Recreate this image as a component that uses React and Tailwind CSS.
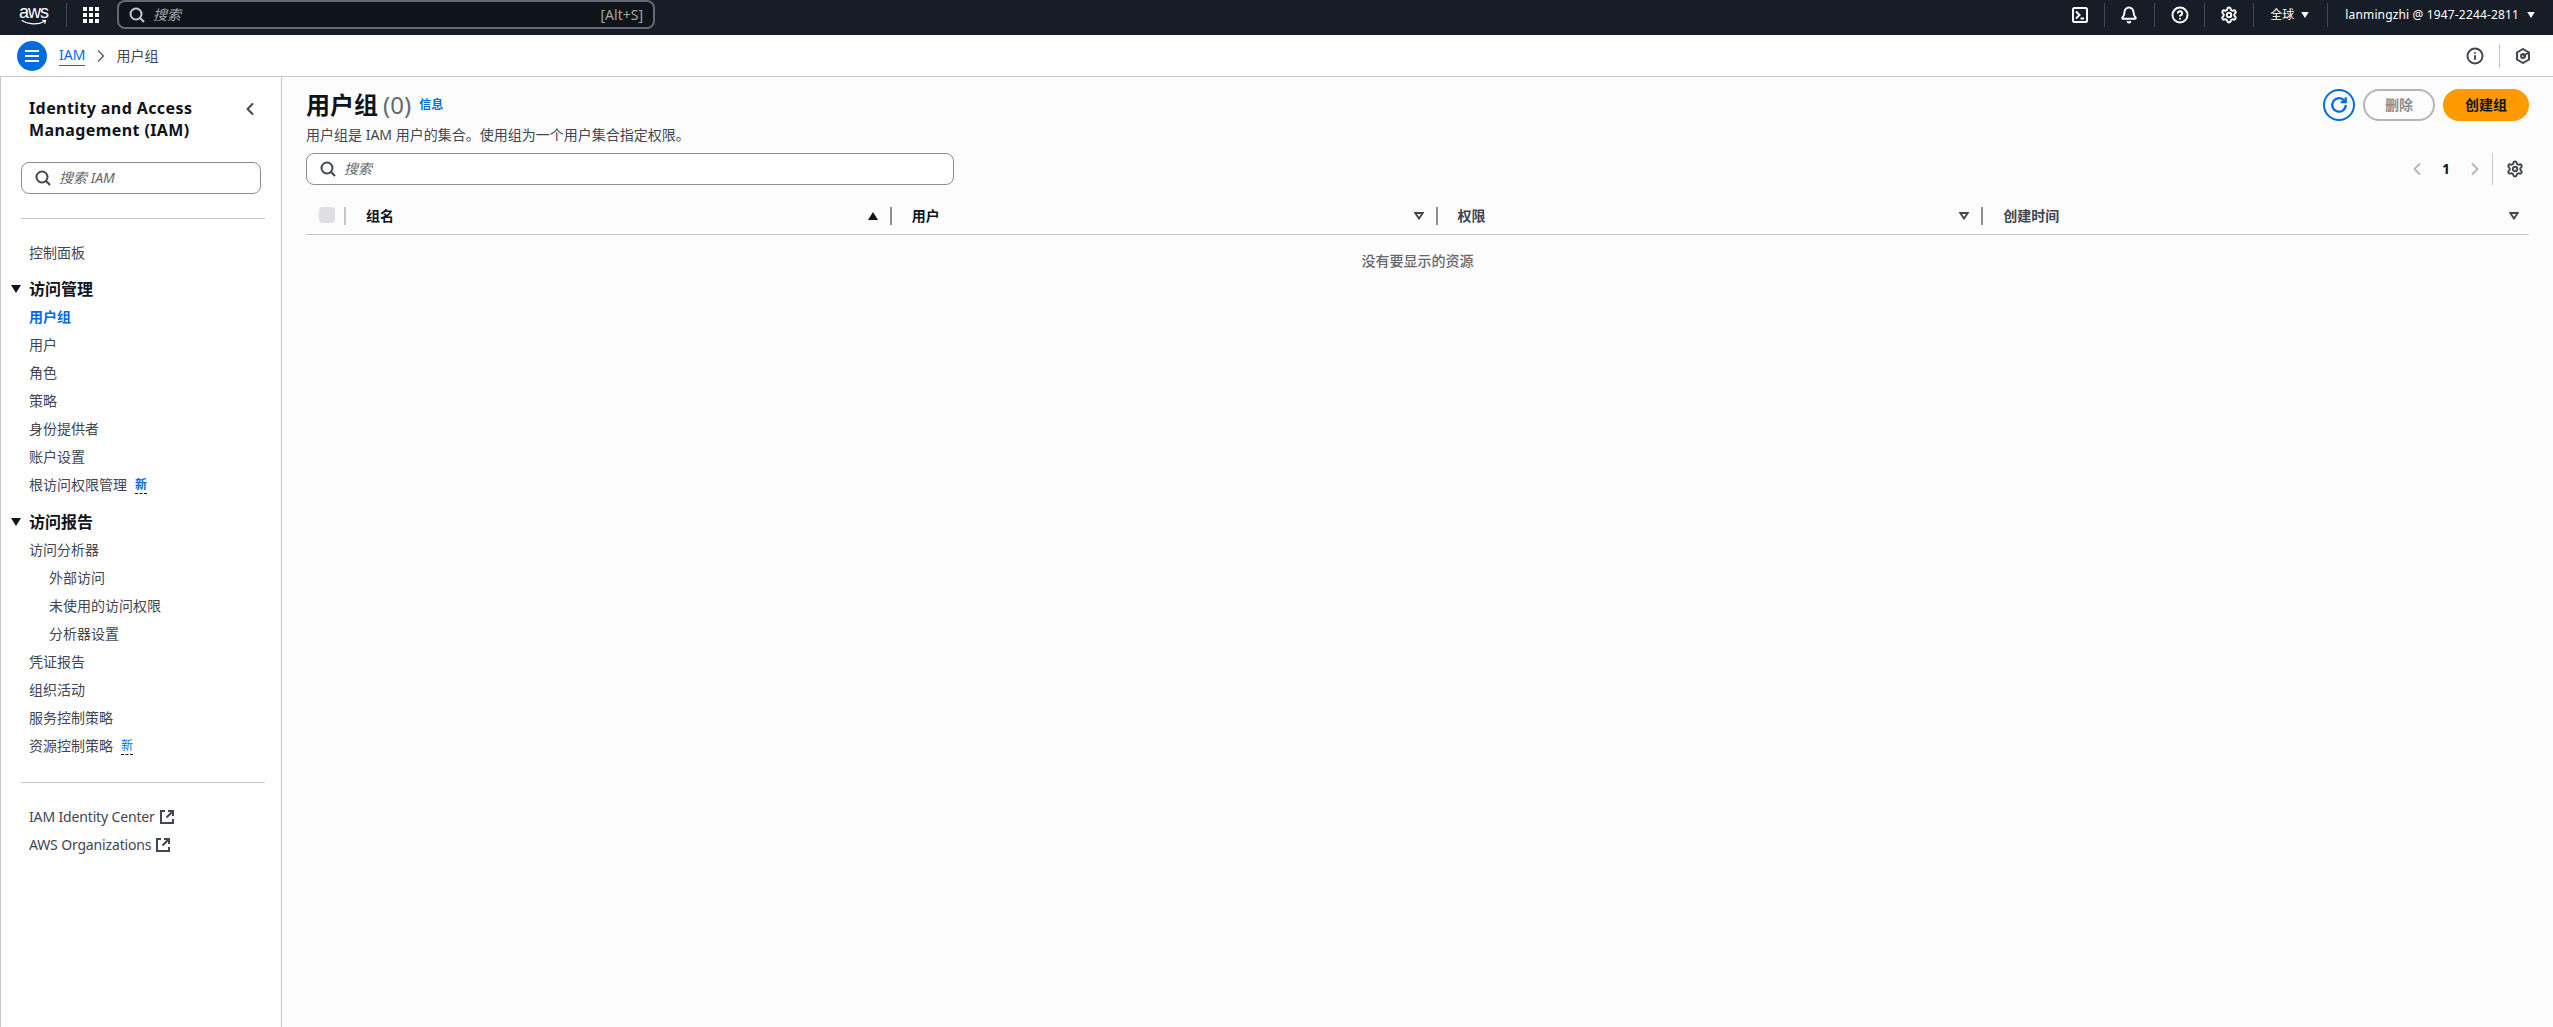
import { Settings, Bell, CircleHelp, Info, ChevronLeft, ChevronRight } from "lucide-react";

const FONT = "font-['Noto_Sans','Noto_Sans_CJK_SC',sans-serif]";

function SearchIcon({ className }) {
  return (
    <svg viewBox="0 0 16 16" className={`w-4 h-4 shrink-0 ${className}`} fill="none" stroke="currentColor" strokeWidth="2">
      <circle cx="7" cy="7" r="5.500" />
      <path d="M15 15l-4.200-4.200" />
    </svg>
  );
}

function Caret({ className }) {
  return (
    <svg viewBox="0 0 10 8" className={`shrink-0 ${className}`} fill="currentColor">
      <path d="M0 0h10L5 8z" />
    </svg>
  );
}

function SortDown() {
  return (
    <svg viewBox="0 0 10 8" className="w-[10px] h-2 shrink-0 text-[#424650]" fill="none" stroke="currentColor" strokeWidth="1.8">
      <path d="M1.200 1h7.600L5 6.600z" />
    </svg>
  );
}

function ExternalIcon() {
  return (
    <svg viewBox="0 0 16 16" className="w-4 h-4 shrink-0 text-[#424650] ml-[4px]" fill="none" stroke="currentColor" strokeWidth="2">
      <path d="M6 2H2v12h12v-4" />
      <path d="M9 2h5v5M14 2L7.500 8.500" />
    </svg>
  );
}

function NavDivider() {
  return <div className="w-px h-6 bg-[#424650]" />;
}

function NavItem({ children, indent, active, latin }) {
  return (
    <div
      className={`h-7 flex items-center text-sm ${indent ? "pl-[49px]" : "pl-[29px]"} ${
        active ? "font-bold text-[#006ce0]" : "text-[#424650]"
      } ${latin ? "tracking-[-0.15px]" : ""}`}
    >
      {children}
    </div>
  );
}

function NewBadge({ bold }) {
  return (
    <span className={`ml-2 text-[12px] leading-4 text-[#006ce0] border-b border-dashed border-[#0f141a] ${bold ? "font-bold" : ""}`}>
      新
    </span>
  );
}

function SectionHead({ children, second }) {
  return (
    <div className={`h-7 flex items-center pl-[11px] ${second ? "mt-[9px]" : "mt-2"}`}>
      <Caret className="w-[10px] h-2 text-[#0f141a]" />
      <span className="ml-2 text-base font-bold text-[#0f141a]">{children}</span>
    </div>
  );
}

function Column({ label, strong, sorted, last }) {
  return (
    <div className="relative flex items-center justify-between pl-5 pr-[10px] pb-[2px]">
      <span className={`text-sm font-bold ${strong ? "text-[#0f141a]" : "text-[#424650]"}`}>{label}</span>
      <div className={last ? "" : "mr-[4px]"}>
        {sorted ? <Caret className="w-[10px] h-2 text-[#0f141a] rotate-180" /> : <SortDown />}
      </div>
      {!last && <div className="absolute right-0 top-[7px] w-[2px] h-[18px] bg-[#8c8c94]" />}
    </div>
  );
}

export default function App() {
  return (
    <div className={`h-screen flex flex-col overflow-hidden bg-[#fcfcfc] ${FONT}`}>
      {/* Top nav */}
      <header className="h-[35px] shrink-0 bg-[#161d26] flex items-center pb-[6px] text-white">
        <div className="w-[66px] flex justify-end pr-[17px]">
          <div className="relative w-[30px] h-[20px]">
            <span className="absolute -top-[3px] left-0 text-[18px] leading-5 tracking-[-1px] font-['Liberation_Sans',sans-serif]">aws</span>
            <svg viewBox="0 0 30 8" className="absolute left-0 -bottom-[1px] w-[30px] h-[7px]" fill="none" stroke="currentColor" strokeWidth="1.500">
              <path d="M1 1.500C8 6.500 20 7 27 2.500M24.500 1.500L28 1.800l-.8 3.400" />
            </svg>
          </div>
        </div>
        <NavDivider />
        <div className="ml-4 grid grid-cols-3 gap-[2px] w-4 h-4">
          {[...Array(9)].map((_, i) => (
            <div key={i} className="bg-white" />
          ))}
        </div>
        <div className="ml-[18px] w-[538px] h-[29px] self-start bg-[#0f141a] border-2 border-[#656871] rounded-lg flex items-center px-[10px]">
          <SearchIcon className="text-[#c6c6cd]" />
          <span className="ml-2 text-sm italic text-[#a4a4ad]">搜索</span>
          <span className="ml-auto text-sm text-[#a4a4ad]">[Alt+S]</span>
        </div>
        <div className="ml-auto flex items-center">
          <svg viewBox="0 0 16 16" className="w-4 h-4" fill="none" stroke="currentColor" strokeWidth="2">
            <rect x="1" y="1" width="14" height="14" rx="1.500" />
            <path d="M4 4.500L7.500 8 4 11.500M8.500 11.500h3.500" />
          </svg>
          <div className="ml-4 mr-[15px]"><NavDivider /></div>
          <Bell className="w-[18px] h-[18px]" strokeWidth={2.6} />
          <div className="mx-4"><NavDivider /></div>
          <CircleHelp className="w-[18px] h-[18px]" strokeWidth={2.6} />
          <div className="mx-[15px]"><NavDivider /></div>
          <Settings className="w-[18px] h-[18px]" strokeWidth={2.6} />
          <div className="ml-[15px] mr-4"><NavDivider /></div>
          <span className="text-xs">全球</span>
          <Caret className="w-2 h-[6px] ml-[7px] text-white" />
          <div className="ml-[18px] mr-[17px]"><NavDivider /></div>
          <span className="text-xs tracking-[0.15px]">lanmingzhi @ 1947-2244-2811</span>
          <Caret className="w-2 h-[6px] ml-2 mr-[18px] text-white" />
        </div>
      </header>

      {/* Breadcrumb bar */}
      <div className="h-[42px] shrink-0 bg-white border-b border-[#c6c6cd] flex items-center pl-[17px] pr-[22px]">
        <div className="w-[30px] h-[30px] rounded-full bg-[#006ce0] flex flex-col items-center justify-center gap-[3px]">
          <div className="w-[14px] h-[2px] bg-white" />
          <div className="w-[14px] h-[2px] bg-white" />
          <div className="w-[14px] h-[2px] bg-white" />
        </div>
        <span className="ml-3 text-sm leading-[20px] text-[#006ce0] border-b border-[#006ce0]">IAM</span>
        <ChevronRight className="w-5 h-5 ml-[6px] mr-[5px] text-[#656871]" strokeWidth={2} />
        <span className="text-sm text-[#424650]">用户组</span>
        <div className="ml-auto flex items-center text-[#424650]">
          <Info className="w-[18px] h-[18px]" strokeWidth={2.6} />
          <div className="w-px h-6 bg-[#c6c6cd] mx-[15px]" />
          <svg viewBox="0 0 16 16" className="w-4 h-4" fill="none" stroke="currentColor" strokeWidth="2">
            <path d="M8 1l6 3.500v7L8 15l-6-3.500v-7z" />
            <circle cx="8" cy="8" r="2" />
            <path d="M8 8l6-3.500" />
          </svg>
        </div>
      </div>

      <div className="flex-1 flex min-h-0">
        {/* Side nav */}
        <aside className="w-[282px] shrink-0 bg-white border-l border-r border-[#c6c6cd]">
          <div className="pt-5 pl-7 pr-[21px] flex justify-between">
            <h2 className="text-base leading-[22px] font-bold tracking-[0.4px] text-[#0f141a]">
              Identity and Access
              <br />
              Management (IAM)
            </h2>
            <ChevronLeft className="w-5 h-5 mt-[2px] text-[#424650]" strokeWidth={2.4} />
          </div>
          <div className="ml-5 mt-[21px] w-[240px] h-8 border border-[#8c8c94] rounded-lg flex items-center px-[13px]">
            <SearchIcon className="text-[#424650]" />
            <span className="ml-[8px] text-sm italic text-[#656871]">搜索 IAM</span>
          </div>
          <div className="ml-5 mt-6 w-[244px] h-px bg-[#c6c6cd]" />
          <div className="mt-5 -ml-px">
            <NavItem>控制面板</NavItem>
            <SectionHead>访问管理</SectionHead>
            <NavItem active>用户组</NavItem>
            <NavItem>用户</NavItem>
            <NavItem>角色</NavItem>
            <NavItem>策略</NavItem>
            <NavItem>身份提供者</NavItem>
            <NavItem>账户设置</NavItem>
            <NavItem>
              根访问权限管理
              <NewBadge bold />
            </NavItem>
            <SectionHead second>访问报告</SectionHead>
            <NavItem>访问分析器</NavItem>
            <NavItem indent>外部访问</NavItem>
            <NavItem indent>未使用的访问权限</NavItem>
            <NavItem indent>分析器设置</NavItem>
            <NavItem>凭证报告</NavItem>
            <NavItem>组织活动</NavItem>
            <NavItem>服务控制策略</NavItem>
            <NavItem>
              资源控制策略
              <NewBadge />
            </NavItem>
          </div>
          <div className="ml-5 mt-[22px] w-[244px] h-px bg-[#c6c6cd]" />
          <div className="mt-5 -ml-px">
            <NavItem latin>
              IAM Identity Center
              <ExternalIcon />
            </NavItem>
            <NavItem latin>
              AWS Organizations
              <ExternalIcon />
            </NavItem>
          </div>
        </aside>

        {/* Main content */}
        <main className="flex-1 min-w-0 pl-6 pr-6 pt-3">
          <div className="flex justify-between">
            <div>
              <div className="flex items-center h-8">
                <h1 className="text-2xl leading-8 font-bold text-[#0f141a]">用户组</h1>
                <span className="ml-[5px] text-2xl leading-8 text-[#656871]">(0)</span>
                <span className="ml-2 text-xs font-bold text-[#006ce0]">信息</span>
              </div>
              <p className="mt-1 text-sm leading-5 text-[#424650]">用户组是 IAM 用户的集合。使用组为一个用户集合指定权限。</p>
            </div>
            <div className="flex items-start gap-2">
              <div className="w-8 h-8 rounded-full border-2 border-[#006ce0] flex items-center justify-center text-[#006ce0]">
                <svg viewBox="0 0 16 16" className="w-[18px] h-[18px]" fill="none" stroke="currentColor" strokeWidth="2">
                  <path d="M14 8a6 6 0 1 1-2-4.500L14 5.500" />
                  <path d="M14 1v4.500H9.500" />
                </svg>
              </div>
              <div className="w-[72px] h-8 rounded-full border-2 border-[#b4b4bb] flex items-center justify-center text-sm font-bold text-[#8c8c94]">删除</div>
              <div className="w-[86px] h-8 rounded-full bg-[#ff9900] flex items-center justify-center text-sm font-bold text-[#0f141a]">创建组</div>
            </div>
          </div>

          <div className="mt-2 flex items-center justify-between h-8">
            <div className="w-[648px] h-8 bg-white border border-[#8c8c94] rounded-lg flex items-center px-[13px]">
              <SearchIcon className="text-[#424650]" />
              <span className="ml-[8px] text-sm italic text-[#656871]">搜索</span>
            </div>
            <div className="flex items-center text-[#b4b4bb] pr-[5px]">
              <ChevronLeft className="w-5 h-5" strokeWidth={2.2} />
              <span className="mx-[15px] text-sm font-bold text-[#0f141a]">1</span>
              <ChevronRight className="w-5 h-5" strokeWidth={2.2} />
              <div className="w-px h-8 bg-[#c6c6cd] ml-[7px] mr-[13px]" />
              <Settings className="w-[18px] h-[18px] text-[#424650]" strokeWidth={2.6} />
            </div>
          </div>

          <div className="mt-[15px] grid grid-cols-[40px_repeat(4,1fr)] h-[35px] border-b border-[#c6c6cd]">
            <div className="relative pl-[13px] pt-[7px]">
              <div className="w-4 h-4 rounded bg-[#dedee3]" />
              <div className="absolute right-0 top-[7px] w-[2px] h-[18px] bg-[#c6c6cd]" />
            </div>
            <Column label="组名" strong sorted />
            <Column label="用户" strong />
            <Column label="权限" />
            <Column label="创建时间" last />
          </div>
          <p className="pt-4 text-center text-sm leading-5 font-medium text-[#656871]">没有要显示的资源</p>
        </main>
      </div>
    </div>
  );
}
